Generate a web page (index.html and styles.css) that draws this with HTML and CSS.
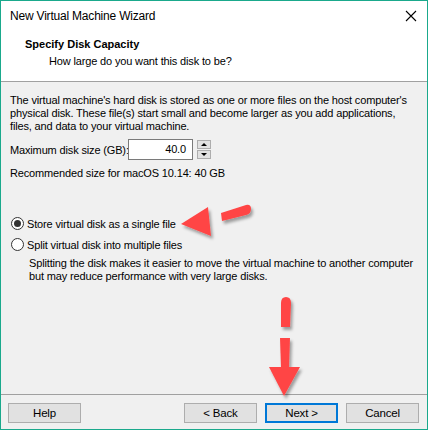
FILE: index.html
```html
<!DOCTYPE html>
<html lang="en">
<head>
  <meta charset="UTF-8">
  <title>New Virtual Machine Wizard</title>
  <link rel="stylesheet" href="styles.css">
</head>
<body>
  <div class="window">
    <div class="titlebar">
      <span class="title">New Virtual Machine Wizard</span>
      <svg class="close" width="12" height="12" viewBox="0 0 12 12">
        <path d="M1 1L11 11M11 1L1 11" stroke="#000" stroke-width="1.1" fill="none"/>
      </svg>
    </div>

    <div class="header">
      <div class="header-title">Specify Disk Capacity</div>
      <div class="header-sub">How large do you want this disk to be?</div>
    </div>

    <div class="content">
      <p class="intro">The virtual machine's hard disk is stored as one or more files on the host computer's<br>physical disk. These file(s) start small and become larger as you add applications,<br>files, and data to your virtual machine.</p>

      <div class="size-row">
        <label>Maximum disk size (GB):</label>
        <div class="size-input">40.0</div>
        <div class="spinner">
          <div class="spin-btn"><span class="tri-up"></span></div>
          <div class="spin-btn"><span class="tri-down"></span></div>
        </div>
      </div>

      <p class="recommended">Recommended size for macOS 10.14: 40 GB</p>

      <div class="options">
        <div class="radio-row">
          <span class="radio checked"></span>
          <span>Store virtual disk as a single file</span>
        </div>
        <div class="radio-row">
          <span class="radio"></span>
          <span>Split virtual disk into multiple files</span>
        </div>
        <p class="split-note">Splitting the disk makes it easier to move the virtual machine to another computer<br>but may reduce performance with very large disks.</p>
      </div>
    </div>

    <div class="footer">
      <button class="btn">Help</button>
      <div class="spacer"></div>
      <button class="btn">&lt; Back</button>
      <button class="btn default">Next &gt;</button>
      <button class="btn">Cancel</button>
    </div>

    <!-- red hint arrows drawn over the dialog -->
    <svg class="hints" width="428" height="430" viewBox="0 0 428 430">
      <defs>
        <filter id="shadow" x="-30%" y="-30%" width="160%" height="160%">
          <feDropShadow dx="2" dy="3" stdDeviation="1.6" flood-color="#000" flood-opacity="0.35"/>
        </filter>
      </defs>
      <g fill="#ff4545" filter="url(#shadow)">
        <polygon points="181,224 208,207 211,236"/>
        <path d="M221,213 L246,205 Q251,204 251,209 Q251,214 246,215 L222,221 Z"/>
        <path d="M281,327 L281,303 Q281,297 286,297 Q291,297 291,303 L290,327 Z"/>
        <polygon points="280,338 290,338 289,368 281,368"/>
        <polygon points="269,367 300,367 284,396"/>
      </g>
    </svg>
  </div>
</body>
</html>
```
FILE: styles.css
```css
body {
  margin: 0;
}
.window {
  position: relative;
  width: 428px;
  height: 430px;
  box-sizing: border-box;
  border: 1px solid #1aa98c;
  background: #f0f0f0;
  display: flex;
  flex-direction: column;
  color: #000;
  font-family: "Liberation Sans", Arial, sans-serif;
  font-size: 11px;
  letter-spacing: -0.15px;
}
.titlebar {
  height: 29px;
  flex-shrink: 0;
  background: #fff;
  display: flex;
  align-items: center;
  padding: 0 9px 0 9px;
}
.title {
  flex: 1;
  font-size: 12px;
  letter-spacing: -0.2px;
}
.close {
  margin-right: 1px;
}
.header {
  background: #fff;
  height: 52px;
  flex-shrink: 0;
  box-sizing: border-box;
  border-bottom: 1px solid #a0a0a0;
  padding: 8px 0 0 24px;
}
.header-title {
  font-weight: bold;
  height: 17px;
  letter-spacing: 0;
}
.header-sub {
  padding-left: 24px;
}
.content {
  flex: 1;
  min-height: 0;
  padding: 12px 9px 0 9px;
  white-space: nowrap;
}
.intro {
  margin: 0;
  line-height: 13px;
}
.size-row {
  display: flex;
  align-items: center;
  margin-top: 6px;
}
.size-row label {
  width: 118px;
}
.size-input {
  width: 65px;
  height: 21px;
  box-sizing: border-box;
  border: 1px solid #7a7a7a;
  background: #fff;
  text-align: right;
  padding: 3px 6px 0 0;
}
.spinner {
  margin-left: 4px;
  display: flex;
  flex-direction: column;
  gap: 1px;
}
.spin-btn {
  width: 12px;
  height: 7px;
  border: 1px solid #adadad;
  background: #e1e1e1;
  display: flex;
  align-items: center;
  justify-content: center;
}
.tri-up, .tri-down {
  width: 0;
  height: 0;
  border-left: 3px solid transparent;
  border-right: 3px solid transparent;
}
.tri-up {
  border-bottom: 3px solid #000;
}
.tri-down {
  border-top: 3px solid #000;
}
.recommended {
  margin: 7px 0 0 0;
  line-height: 13px;
}
.options {
  margin-top: 33px;
}
.radio-row {
  display: flex;
  align-items: center;
  height: 21px;
}
.radio {
  width: 11px;
  height: 11px;
  border: 1px solid #333;
  border-radius: 50%;
  background: #fff;
  margin: 0 3px 0 1px;
  display: flex;
  align-items: center;
  justify-content: center;
}
.radio.checked::after {
  content: "";
  width: 7px;
  height: 7px;
  border-radius: 50%;
  background: #333;
}
.split-note {
  margin: 2px 0 0 19px;
  line-height: 13px;
}
.footer {
  height: 35px;
  flex-shrink: 0;
  box-sizing: border-box;
  border-top: 1px solid #a0a0a0;
  display: flex;
  align-items: flex-start;
  padding: 8px 8px 0 7px;
  gap: 8px;
}
.spacer {
  flex: 1;
}
.btn {
  width: 73px;
  height: 20px;
  box-sizing: border-box;
  border: 1px solid #adadad;
  background: #e1e1e1;
  font-family: "Liberation Sans", Arial, sans-serif;
  font-size: 11.5px;
  letter-spacing: -0.2px;
  padding: 0;
  color: #000;
}
.btn.default {
  border: 2px solid #0078d7;
}
.hints {
  position: absolute;
  left: -1px;
  top: -1px;
  pointer-events: none;
}
```
